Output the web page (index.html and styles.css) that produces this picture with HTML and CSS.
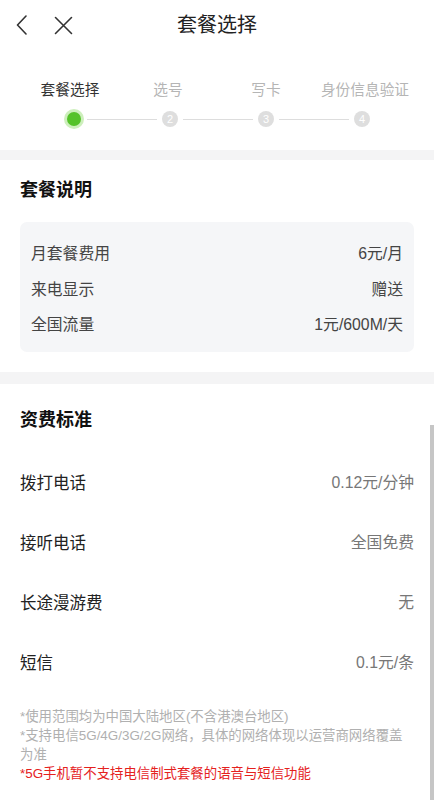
FILE: index.html
```html
<!DOCTYPE html>
<html lang="zh-CN">
<head>
<meta charset="utf-8">
<title>套餐选择</title>
<link rel="stylesheet" href="styles.css">
</head>
<body>
<div class="page">
  <header class="topbar">
    <div class="nav-left">
      <svg class="ic-back" width="12" height="20" viewBox="0 0 12 20"><path d="M10 1 L1.5 10 L10 19" fill="none" stroke="#333" stroke-width="1.6" stroke-linecap="round" stroke-linejoin="round"/></svg>
      <svg class="ic-close" width="19" height="19" viewBox="0 0 19 19"><path d="M1.5 1.5 L17.5 17.5 M17.5 1.5 L1.5 17.5" fill="none" stroke="#333" stroke-width="1.6" stroke-linecap="round"/></svg>
    </div>
    <div class="title">套餐选择</div>
    <div class="nav-right"></div>
  </header>

  <section class="steps">
    <div class="step-labels">
      <span class="lbl active">套餐选择</span>
      <span class="lbl">选号</span>
      <span class="lbl">写卡</span>
      <span class="lbl">身份信息验证</span>
    </div>
    <div class="step-dots">
      <span class="dot current"></span>
      <span class="line"></span>
      <span class="dot">2</span>
      <span class="line"></span>
      <span class="dot">3</span>
      <span class="line"></span>
      <span class="dot">4</span>
    </div>
  </section>

  <div class="band band-a"></div>

  <section class="sec sec-plan">
    <h2 class="sec-title">套餐说明</h2>
    <div class="card">
      <div class="crow"><span>月套餐费用</span><span>6元/月</span></div>
      <div class="crow"><span>来电显示</span><span>赠送</span></div>
      <div class="crow"><span>全国流量</span><span>1元/600M/天</span></div>
    </div>
  </section>

  <div class="band band-b"></div>

  <section class="sec sec-fee">
    <h2 class="sec-title">资费标准</h2>
    <div class="frow"><span class="fk">拨打电话</span><span class="fv">0.12元/分钟</span></div>
    <div class="frow"><span class="fk">接听电话</span><span class="fv">全国免费</span></div>
    <div class="frow"><span class="fk">长途漫游费</span><span class="fv">无</span></div>
    <div class="frow"><span class="fk">短信</span><span class="fv">0.1元/条</span></div>
    <div class="notes">
      <p>*使用范围均为中国大陆地区(不含港澳台地区)</p>
      <p>*支持电信5G/4G/3G/2G网络，具体的网络体现以运营商网络覆盖为准</p>
      <p class="warn">*5G手机暂不支持电信制式套餐的语音与短信功能</p>
    </div>
  </section>
</div>
<div class="scroll-thumb"></div>
</body>
</html>
```

FILE: styles.css
```css
html, body {
  margin: 0;
  padding: 0;
  background: #ffffff;
  overflow: hidden;
}
body {
  font-family: "Liberation Sans", "Noto Sans CJK SC", sans-serif;
  color: #222;
}
.page {
  width: 434px;
}
.topbar {
  height: 50px;
  display: grid;
  grid-template-columns: 1fr auto 1fr;
  align-items: center;
}
.nav-left {
  display: flex;
  align-items: center;
  padding-left: 16px;
  gap: 26px;
}
.ic-back { display: block; }
.ic-close { display: block; }
.title {
  font-size: 20px;
  line-height: 50px;
  color: #222;
}
.steps {
  padding: 30px 24px 23px 26px;
  height: 47px;
}
.step-labels {
  display: grid;
  grid-template-columns: repeat(4, 96px);
  height: 20px;
}
.lbl {
  font-size: 14.7px;
  line-height: 20px;
  text-align: center;
  color: #b5b5b5;
  white-space: nowrap;
}
.lbl.active { color: #333; margin-right: 8px; }
.lbl:nth-child(2) { margin-right: 4px; }
.lbl:nth-child(4) { margin-left: 6px; }
.step-dots {
  display: flex;
  align-items: center;
  padding: 0 40px;
  margin-top: 11px;
  height: 16px;
}
.dot {
  width: 16px;
  height: 16px;
  border-radius: 50%;
  background: #dedede;
  color: #fff;
  font-size: 11px;
  line-height: 16px;
  text-align: center;
  flex: none;
}
.dot.current {
  width: 14px;
  height: 14px;
  margin: 1px;
  background: #55c22a;
  box-shadow: 0 0 0 3px #cdefbc;
}
.line {
  flex: 1;
  height: 1px;
  background: #dddddd;
  margin: 0 5px;
}
.band { background: #f4f4f5; }
.band-a { height: 10px; }
.band-b { height: 12px; }
.sec { padding: 0 20px; }
.sec-title {
  margin: 0;
  font-size: 18px;
  line-height: 24px;
  font-weight: 700;
  color: #111;
}
.sec-plan { padding-top: 18px; padding-bottom: 20px; }
.card {
  margin-top: 20px;
  background: #f5f6f8;
  border-radius: 7px;
  padding: 13px 11px 10px 11px;
}
.crow {
  display: flex;
  justify-content: space-between;
  align-items: center;
  height: 35.5px;
  font-size: 15.8px;
  color: #444;
}
.sec-fee { padding-top: 24px; }
.sec-fee .sec-title { margin-bottom: 20px; }
.frow {
  display: flex;
  justify-content: space-between;
  align-items: center;
  height: 60px;
}
.fk {
  font-size: 16.5px;
  color: #222;
}
.fv {
  font-size: 15.8px;
  color: #777;
}
.notes {
  margin-top: 15px;
  font-size: 13.4px;
  line-height: 19px;
  color: #b0b0b0;
}
.notes p { margin: 0; }
.notes .warn { color: #e5211d; }
.scroll-thumb {
  position: fixed;
  right: 0;
  top: 425px;
  width: 4px;
  height: 375px;
  background: #c6c6c6;
}
```
